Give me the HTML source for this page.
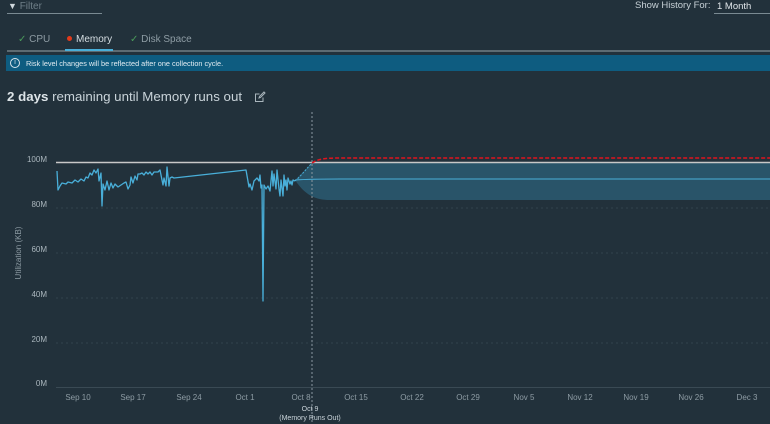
<!DOCTYPE html>
<html><head><meta charset="utf-8"><style>
*{margin:0;padding:0;box-sizing:border-box}
body{width:770px;height:424px;background:#22313b;font-family:"Liberation Sans",sans-serif;color:#c9d3d9;position:relative;overflow:hidden}
.a{position:absolute;white-space:nowrap}
</style></head><body>
<div class="a" style="left:8px;top:1px;font-size:10px;color:#6f7f88"><span style="color:#d0d8dd;font-size:9px">&#9660;</span> Filter</div>
<div class="a" style="left:7px;top:13px;width:95px;height:1px;background:#7a8a92"></div>
<div class="a" style="left:635px;top:0px;font-size:9.5px;color:#c6d0d6">Show History For:</div>
<div class="a" style="left:717px;top:1px;font-size:9.5px;color:#e0e6ea">1 Month</div>
<div class="a" style="left:714px;top:13px;width:56px;height:1px;background:#7a8a92"></div>

<div class="a" style="left:18px;top:34px;font-size:10px;color:#8e9ca4"><span style="color:#4a9a5a">&#10003;</span> CPU</div>
<div class="a" style="left:67px;top:34px;font-size:10px;color:#d6dee3"><span style="display:inline-block;width:5px;height:5px;border-radius:50%;background:#e23a1a;vertical-align:1px;margin-right:4px"></span>Memory</div>
<div class="a" style="left:130px;top:34px;font-size:10px;color:#8e9ca4"><span style="color:#4a9a5a">&#10003;</span> Disk Space</div>
<div class="a" style="left:7px;top:50px;width:763px;height:2px;background:#5d6b72"></div>
<div class="a" style="left:65px;top:49px;width:48px;height:2px;background:#49afd9"></div>

<div class="a" style="left:6px;top:55px;width:764px;height:16px;background:#0e5c80"></div>
<div class="a" style="left:10px;top:58px;width:10px;height:10px;border:1px solid #d8e4ea;border-radius:50%;font-size:7px;line-height:8px;text-align:center;color:#d8e4ea">i</div>
<div class="a" style="left:26px;top:58.5px;font-size:7.3px;color:#e4edf2">Risk level changes will be reflected after one collection cycle.</div>

<div class="a" style="left:7px;top:89px;font-size:13.3px;color:#c9d3d9"><b style="color:#dde4e8">2 days</b> remaining until Memory runs out</div>
<svg class="a" style="left:254px;top:91px" width="12" height="12" viewBox="0 0 12 12"><path d="M9 6.5V10.5H1.5V3H5.5" fill="none" stroke="#aab6bd" stroke-width="1"/><path d="M5 7L5.5 5.5L10 1L11 2L6.5 6.5Z" fill="none" stroke="#aab6bd" stroke-width="1"/></svg>

<svg class="a" style="left:0;top:0" width="770" height="424">
<g stroke="#33434d" stroke-dasharray="2,3" stroke-width="1">
<line x1="56" y1="208" x2="770" y2="208"/><line x1="56" y1="253" x2="770" y2="253"/><line x1="56" y1="298" x2="770" y2="298"/><line x1="56" y1="343" x2="770" y2="343"/>
</g>
<line x1="56" y1="387.5" x2="770" y2="387.5" stroke="#3a4a54"/>
<path d="M295 180 C305 195 315 200 330 200 L770 200 L770 163 L312 163 Z" fill="#2a5a72" opacity="0.85"/>
<line x1="56" y1="162.5" x2="770" y2="162.5" stroke="#c8c8c8" stroke-width="1.5"/>
<path d="M312 163 C318 159 325 158 340 158 L770 158" fill="none" stroke="#e0141e" stroke-width="1.5" stroke-dasharray="4,2"/>
<path d="M295 181 C302 175 307 168 312 163" fill="none" stroke="#49afd9" stroke-width="1" stroke-dasharray="2,1.5"/>
<path d="M295 180 C310 179 320 179 340 179 L770 179" fill="none" stroke="#49afd9" stroke-width="1"/>
<path d="M57 171 L58 190 L60 186 L62 183 L66 184 L68 182 L72 183 L75 180 L78 182 L81 179 L84 181 L86 177 L88 178 L90 173 L92 175 L94 170 L96 173 L98 169 L99 181 L101 173 L102 206 L103 184 L105 190 L107 181 L109 190 L111 183 L113 188 L115 184 L118 187 L121 185 L124 183 L126 182 L128 189 L130 185 L131 177 L133 183 L135 176 L137 180 L138 174 L140 174 L142 173 L144 175 L146 172 L148 174 L150 172 L152 175 L154 172 L156 172 L158 172 L160 170 L163 185 L164 178 L166 186 L167 167 L169 186 L170 178 L172 177 L174 178 L246 170 L249 187 L250 184 L252 190 L254 181 L257 178 L259 181 L260 175 L261 188 L262 185 L263 301 L264 185 L266 189 L268 186 L270 191 L272 171 L273 186 L274 174 L276 189 L277 170 L279 189 L280 196 L281 180 L283 196 L284 175 L285 186 L286 180 L287 190 L288 178 L290 184 L291 181 L292 185 L293 180 L295 181" fill="none" stroke="#49afd9" stroke-width="1.3" stroke-linejoin="round"/>
<line x1="312" y1="112" x2="312" y2="424" stroke="#8a98a0" stroke-dasharray="2,2"/>
<g font-family="Liberation Sans,sans-serif" font-size="8" fill="#aab6bd" text-anchor="end">
<text x="47" y="162">100M</text><text x="47" y="207">80M</text><text x="47" y="252">60M</text><text x="47" y="297">40M</text><text x="47" y="342">20M</text><text x="47" y="386">0M</text>
</g>
<text x="21" y="253" font-family="Liberation Sans,sans-serif" font-size="8" fill="#8e9ca4" text-anchor="middle" transform="rotate(-90 21 253)">Utilization (KB)</text>
<g font-family="Liberation Sans,sans-serif" font-size="8" fill="#8e9ca4" text-anchor="middle">
<text x="78" y="400">Sep 10</text><text x="133" y="400">Sep 17</text><text x="189" y="400">Sep 24</text><text x="245" y="400">Oct 1</text><text x="301" y="400">Oct 8</text><text x="356" y="400">Oct 15</text><text x="412" y="400">Oct 22</text><text x="468" y="400">Oct 29</text><text x="524" y="400">Nov 5</text><text x="580" y="400">Nov 12</text><text x="636" y="400">Nov 19</text><text x="691" y="400">Nov 26</text><text x="747" y="400">Dec 3</text>
</g>
<g font-family="Liberation Sans,sans-serif" font-size="7" fill="#c9d3d9" text-anchor="middle">
<text x="310" y="411">Oct 9</text><text x="310" y="420">(Memory Runs Out)</text>
</g>
</svg>
</body></html>
